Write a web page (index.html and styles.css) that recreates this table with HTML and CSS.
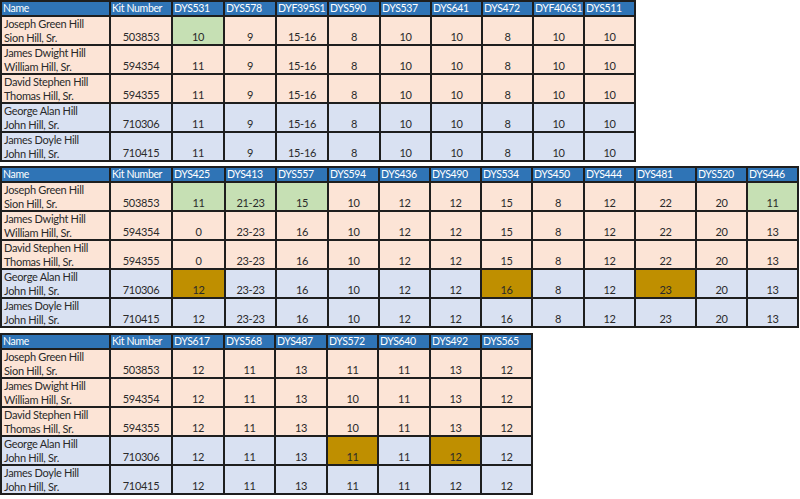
FILE: index.html
```html
<!DOCTYPE html>
<html>
<head>
<meta charset="utf-8">
<link rel="stylesheet" href="styles.css">
</head>
<body>
<div class="page">
  <div class="sheet t1">
    <div class="c h">Name</div><div class="c h">Kit Number</div><div class="c h">DYS531</div><div class="c h">DYS578</div><div class="c h">DYF395S1</div><div class="c h">DYS590</div><div class="c h">DYS537</div><div class="c h">DYS641</div><div class="c h">DYS472</div><div class="c h">DYF406S1</div><div class="c h">DYS511</div>

    <div class="c n p">Joseph Green Hill<br>Sion Hill, Sr.</div><div class="c v p">503853</div><div class="c v g">10</div><div class="c v p">9</div><div class="c v p">15-16</div><div class="c v p">8</div><div class="c v p">10</div><div class="c v p">10</div><div class="c v p">8</div><div class="c v p">10</div><div class="c v p">10</div>

    <div class="c n p">James Dwight Hill<br>William Hill, Sr.</div><div class="c v p">594354</div><div class="c v p">11</div><div class="c v p">9</div><div class="c v p">15-16</div><div class="c v p">8</div><div class="c v p">10</div><div class="c v p">10</div><div class="c v p">8</div><div class="c v p">10</div><div class="c v p">10</div>

    <div class="c n p">David Stephen Hill<br>Thomas Hill, Sr.</div><div class="c v p">594355</div><div class="c v p">11</div><div class="c v p">9</div><div class="c v p">15-16</div><div class="c v p">8</div><div class="c v p">10</div><div class="c v p">10</div><div class="c v p">8</div><div class="c v p">10</div><div class="c v p">10</div>

    <div class="c n b">George Alan Hill<br>John Hill, Sr.</div><div class="c v b">710306</div><div class="c v b">11</div><div class="c v b">9</div><div class="c v b">15-16</div><div class="c v b">8</div><div class="c v b">10</div><div class="c v b">10</div><div class="c v b">8</div><div class="c v b">10</div><div class="c v b">10</div>

    <div class="c n b">James Doyle Hill<br>John Hill, Sr.</div><div class="c v b">710415</div><div class="c v b">11</div><div class="c v b">9</div><div class="c v b">15-16</div><div class="c v b">8</div><div class="c v b">10</div><div class="c v b">10</div><div class="c v b">8</div><div class="c v b">10</div><div class="c v b">10</div>
  </div>

  <div class="sheet t2">
    <div class="c h">Name</div><div class="c h">Kit Number</div><div class="c h">DYS425</div><div class="c h">DYS413</div><div class="c h">DYS557</div><div class="c h">DYS594</div><div class="c h">DYS436</div><div class="c h">DYS490</div><div class="c h">DYS534</div><div class="c h">DYS450</div><div class="c h">DYS444</div><div class="c h">DYS481</div><div class="c h">DYS520</div><div class="c h">DYS446</div>

    <div class="c n p">Joseph Green Hill<br>Sion Hill, Sr.</div><div class="c v p">503853</div><div class="c v g">11</div><div class="c v g">21-23</div><div class="c v g">15</div><div class="c v p">10</div><div class="c v p">12</div><div class="c v p">12</div><div class="c v p">15</div><div class="c v p">8</div><div class="c v p">12</div><div class="c v p">22</div><div class="c v p">20</div><div class="c v g">11</div>

    <div class="c n p">James Dwight Hill<br>William Hill, Sr.</div><div class="c v p">594354</div><div class="c v p">0</div><div class="c v p">23-23</div><div class="c v p">16</div><div class="c v p">10</div><div class="c v p">12</div><div class="c v p">12</div><div class="c v p">15</div><div class="c v p">8</div><div class="c v p">12</div><div class="c v p">22</div><div class="c v p">20</div><div class="c v p">13</div>

    <div class="c n p">David Stephen Hill<br>Thomas Hill, Sr.</div><div class="c v p">594355</div><div class="c v p">0</div><div class="c v p">23-23</div><div class="c v p">16</div><div class="c v p">10</div><div class="c v p">12</div><div class="c v p">12</div><div class="c v p">15</div><div class="c v p">8</div><div class="c v p">12</div><div class="c v p">22</div><div class="c v p">20</div><div class="c v p">13</div>

    <div class="c n b">George Alan Hill<br>John Hill, Sr.</div><div class="c v b">710306</div><div class="c v o">12</div><div class="c v b">23-23</div><div class="c v b">16</div><div class="c v b">10</div><div class="c v b">12</div><div class="c v b">12</div><div class="c v o">16</div><div class="c v b">8</div><div class="c v b">12</div><div class="c v o">23</div><div class="c v b">20</div><div class="c v b">13</div>

    <div class="c n b">James Doyle Hill<br>John Hill, Sr.</div><div class="c v b">710415</div><div class="c v b">12</div><div class="c v b">23-23</div><div class="c v b">16</div><div class="c v b">10</div><div class="c v b">12</div><div class="c v b">12</div><div class="c v b">16</div><div class="c v b">8</div><div class="c v b">12</div><div class="c v b">23</div><div class="c v b">20</div><div class="c v b">13</div>
  </div>

  <div class="sheet t3">
    <div class="c h">Name</div><div class="c h">Kit Number</div><div class="c h">DYS617</div><div class="c h">DYS568</div><div class="c h">DYS487</div><div class="c h">DYS572</div><div class="c h">DYS640</div><div class="c h">DYS492</div><div class="c h">DYS565</div>

    <div class="c n p">Joseph Green Hill<br>Sion Hill, Sr.</div><div class="c v p">503853</div><div class="c v p">12</div><div class="c v p">11</div><div class="c v p">13</div><div class="c v p">11</div><div class="c v p">11</div><div class="c v p">13</div><div class="c v p">12</div>

    <div class="c n p">James Dwight Hill<br>William Hill, Sr.</div><div class="c v p">594354</div><div class="c v p">12</div><div class="c v p">11</div><div class="c v p">13</div><div class="c v p">10</div><div class="c v p">11</div><div class="c v p">13</div><div class="c v p">12</div>

    <div class="c n p">David Stephen Hill<br>Thomas Hill, Sr.</div><div class="c v p">594355</div><div class="c v p">12</div><div class="c v p">11</div><div class="c v p">13</div><div class="c v p">10</div><div class="c v p">11</div><div class="c v p">13</div><div class="c v p">12</div>

    <div class="c n b">George Alan Hill<br>John Hill, Sr.</div><div class="c v b">710306</div><div class="c v b">12</div><div class="c v b">11</div><div class="c v b">13</div><div class="c v o">11</div><div class="c v b">11</div><div class="c v o">12</div><div class="c v b">12</div>

    <div class="c n b">James Doyle Hill<br>John Hill, Sr.</div><div class="c v b">710415</div><div class="c v b">12</div><div class="c v b">11</div><div class="c v b">13</div><div class="c v b">11</div><div class="c v b">11</div><div class="c v b">12</div><div class="c v b">12</div>
  </div>
</div>
</body>
</html>
```

FILE: styles.css
```css
html, body {
  margin: 0;
  padding: 0;
  background: #ffffff;
}

.page {
  display: flex;
  flex-direction: column;
  align-items: flex-start;
  font-family: "Lato", "Liberation Sans", sans-serif;
  font-size: 11px;
  letter-spacing: -0.3px;
  color: #2a2a2a;
}

.sheet {
  display: grid;
  width: max-content;
  background: #1e1e1e;
  padding: 2px;
  gap: 2px;
  grid-template-rows: 13px repeat(5, 27px);
}

.t1 {
  grid-template-columns: 107px 60px 50px 50px 50px 50px 49px 49px 49px 49px 49px;
}

.t2 {
  margin-top: 4px;
  grid-template-columns: 107px 60px 51px 49px 50px 49px 49px 49px 49px 50px 49px 59px 49px 49px;
}

.t3 {
  margin-top: 5px;
  grid-template-columns: 107px 60px 50px 49px 50px 49px 50px 49px 49px;
}

.c {
  display: flex;
  overflow: hidden;
  white-space: nowrap;
}

.h {
  background: #2f74b6;
  color: #ffffff;
  align-items: center;
  padding-left: 1px;
  font-size: 10.5px;
  letter-spacing: -0.35px;
  line-height: 13px;
}

.n {
  flex-direction: column;
  justify-content: flex-end;
  padding-left: 2px;
  line-height: 13.5px;
}

.v {
  align-items: flex-end;
  justify-content: center;
  line-height: 14px;
}

.p { background: #fce4d6; }
.b { background: #d9e1f2; }
.g { background: #c6e0b4; }
.o { background: #bf8f00; }
```
